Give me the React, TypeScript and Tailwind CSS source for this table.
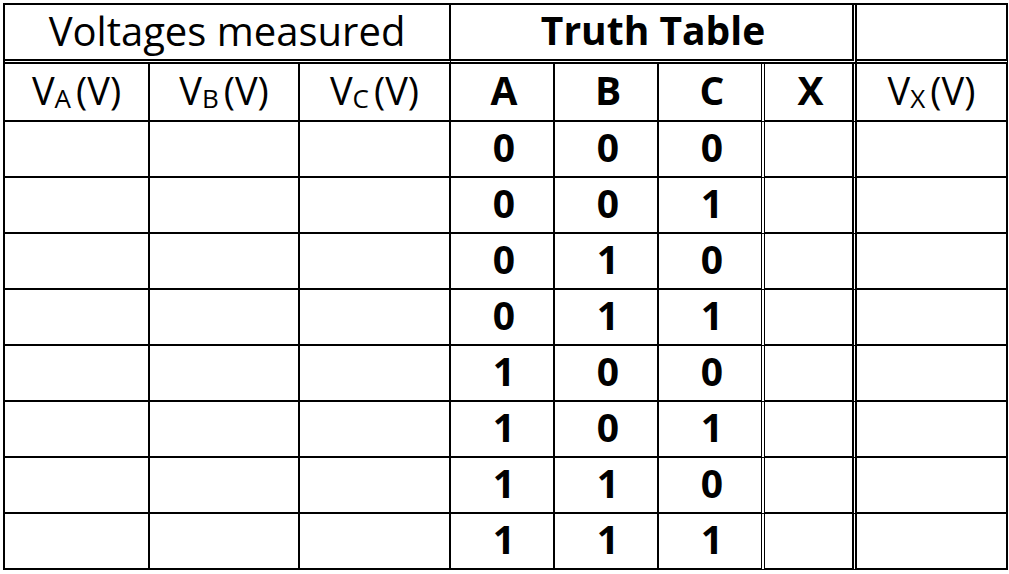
const rows = [
  [0, 0, 0],
  [0, 0, 1],
  [0, 1, 0],
  [0, 1, 1],
  [1, 0, 0],
  [1, 0, 1],
  [1, 1, 0],
  [1, 1, 1],
];

function VoltHead({ sub }: { sub: string }) {
  return (
    <span className="whitespace-nowrap">
      V<span className="relative top-[3px] text-[26px]">{sub}</span>
      <span className="ml-[5px]">(V)</span>
    </span>
  );
}

const cell = "flex items-center justify-center border-r-2 border-b-2 border-black pb-[4px]";
const bit = "flex items-center justify-center border-r-2 border-b-2 border-black pb-[4px] pl-[4px] text-[39px] font-bold";
const dblC = "flex items-center justify-center border-r-[4px] border-b-2 border-black [border-right-style:double] pb-[4px]";
const dblX = "flex items-center justify-center border-r-[5px] border-b-2 border-black [border-right-style:double] pb-[4px]";

export default function App() {
  return (
    <div className="min-h-[574px] w-[1009px] bg-white pl-[3px] pt-[3px] text-black [font-family:'Open_Sans',sans-serif]">
      <div className="grid w-[1005px] grid-cols-[145px_150px_151px_104px_104px_106px_92px_151px] grid-rows-[59px_58px_repeat(8,56px)] border-l-2 border-t-2 border-black">
        <div className="col-span-3 flex items-center justify-center border-r-2 border-b-[5px] border-b-black border-r-black pb-[3px] [border-bottom-style:double] text-[40px]">
          Voltages measured
        </div>
        <div className="col-span-4 flex items-center justify-center border-r-[5px] border-b-[5px] border-double border-black pb-[3px] pl-[3px] text-[39px] font-bold">
          Truth Table
        </div>
        <div className="border-r-2 border-b-[5px] border-b-black border-r-black [border-bottom-style:double]" />

        <div className={`${cell} text-[38px]`}>
          <VoltHead sub="A" />
        </div>
        <div className={`${cell} text-[38px]`}>
          <VoltHead sub="B" />
        </div>
        <div className={`${cell} text-[38px]`}>
          <VoltHead sub="C" />
        </div>
        <div className={bit}>A</div>
        <div className={bit}>B</div>
        <div className={`${dblC} pl-[4px] text-[39px] font-bold`}>C</div>
        <div className={`${dblX} pl-[4px] text-[39px] font-bold`}>X</div>
        <div className={`${cell} text-[38px]`}>
          <VoltHead sub="X" />
        </div>

        {rows.map((r, i) => (
          <div key={i} className="contents">
            <div className={cell} />
            <div className={cell} />
            <div className={cell} />
            <div className={bit}>{r[0]}</div>
            <div className={bit}>{r[1]}</div>
            <div className={`${dblC} pl-[4px] text-[39px] font-bold`}>{r[2]}</div>
            <div className={dblX} />
            <div className={cell} />
          </div>
        ))}
      </div>
    </div>
  );
}
